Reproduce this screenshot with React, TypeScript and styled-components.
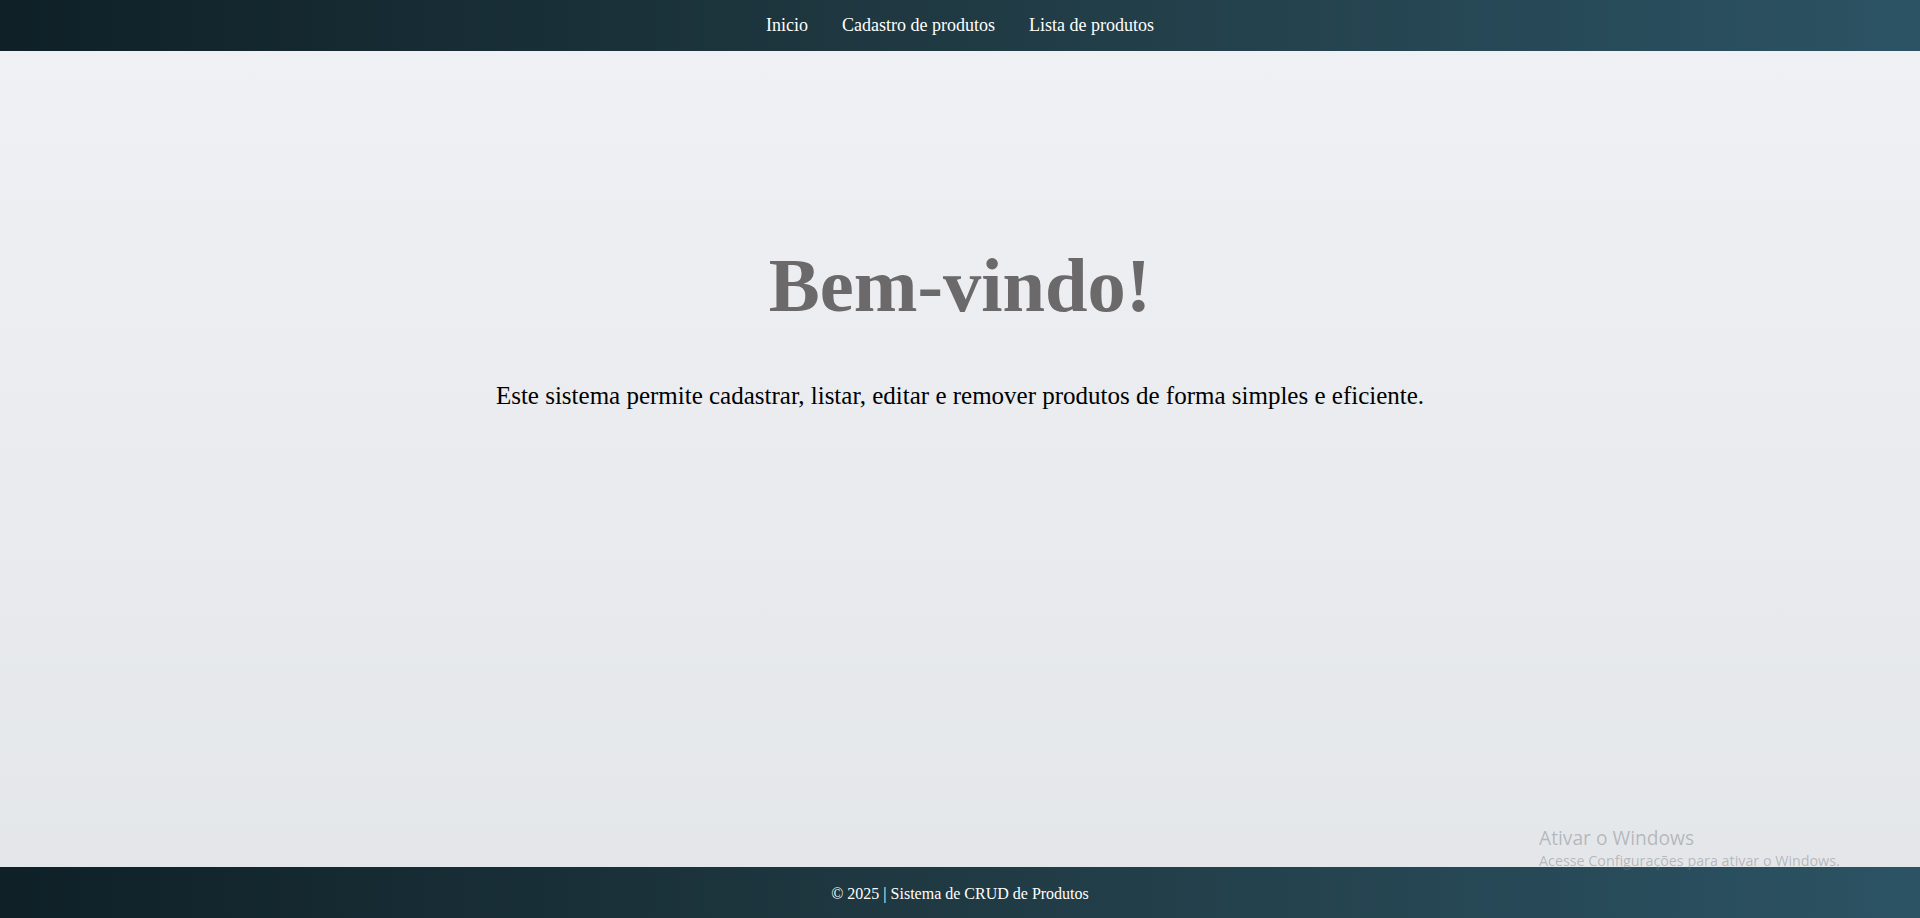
import React from "react";
import styled, { createGlobalStyle } from "styled-components";

const GlobalStyle = createGlobalStyle`
  html, body { margin: 0; padding: 0; height: 100%; }
  body { font-family: "Liberation Serif", "Times New Roman", serif; }
  #root { min-height: 100vh; }
`;

const Page = styled.div`
  display: flex;
  flex-direction: column;
  min-height: 100vh;
  background: linear-gradient(to bottom, #f0f1f4, #e3e6e9);
  position: relative;
`;

const Bar = styled.div`
  height: 51px;
  flex-shrink: 0;
  display: flex;
  align-items: center;
  justify-content: center;
  background: linear-gradient(to right, #0f2027, #203a43, #2c5364);
  color: #ffffff;
`;

const Nav = styled.nav`
  display: flex;
  gap: 34px;
  align-items: center;
`;

const NavLink = styled.a`
  color: #ffffff;
  text-decoration: none;
  font-size: 18px;
  cursor: pointer;
`;

const Main = styled.main`
  flex: 1;
  display: flex;
  flex-direction: column;
  align-items: center;
  padding-top: 193px;
`;

const Title = styled.h1`
  margin: 0 0 53px;
  font-size: 76.5px;
  font-weight: 700;
  color: #6b6969;
  line-height: 1.107;
`;

const Lead = styled.p`
  margin: 0;
  font-size: 25px;
  color: #000000;
`;

const FooterText = styled.p`
  margin: 0;
  font-size: 16px;
  padding-top: 2px;
`;

const Watermark = styled.div`
  position: absolute;
  left: 1539px;
  bottom: 47px;
  font-family: "Open Sans", "Noto Sans", sans-serif;
  color: rgba(120, 124, 130, 0.45);
  pointer-events: none;
`;

const WatermarkTitle = styled.div`
  font-size: 19.2px;
  line-height: 26px;
`;

const WatermarkSub = styled.div`
  font-size: 14.3px;
  line-height: 20px;
`;

export default function App() {
  return (
    <>
      <GlobalStyle />
      <Page>
        <Bar as="header">
          <Nav>
            <NavLink>Inicio</NavLink>
            <NavLink>Cadastro de produtos</NavLink>
            <NavLink>Lista de produtos</NavLink>
          </Nav>
        </Bar>
        <Main>
          <Title>Bem-vindo!</Title>
          <Lead>
            Este sistema permite cadastrar, listar, editar e remover produtos de forma simples e eficiente.
          </Lead>
        </Main>
        <Bar as="footer">
          <FooterText>© 2025 | Sistema de CRUD de Produtos</FooterText>
        </Bar>
        <Watermark>
          <WatermarkTitle>Ativar o Windows</WatermarkTitle>
          <WatermarkSub>Acesse Configurações para ativar o Windows.</WatermarkSub>
        </Watermark>
      </Page>
    </>
  );
}
